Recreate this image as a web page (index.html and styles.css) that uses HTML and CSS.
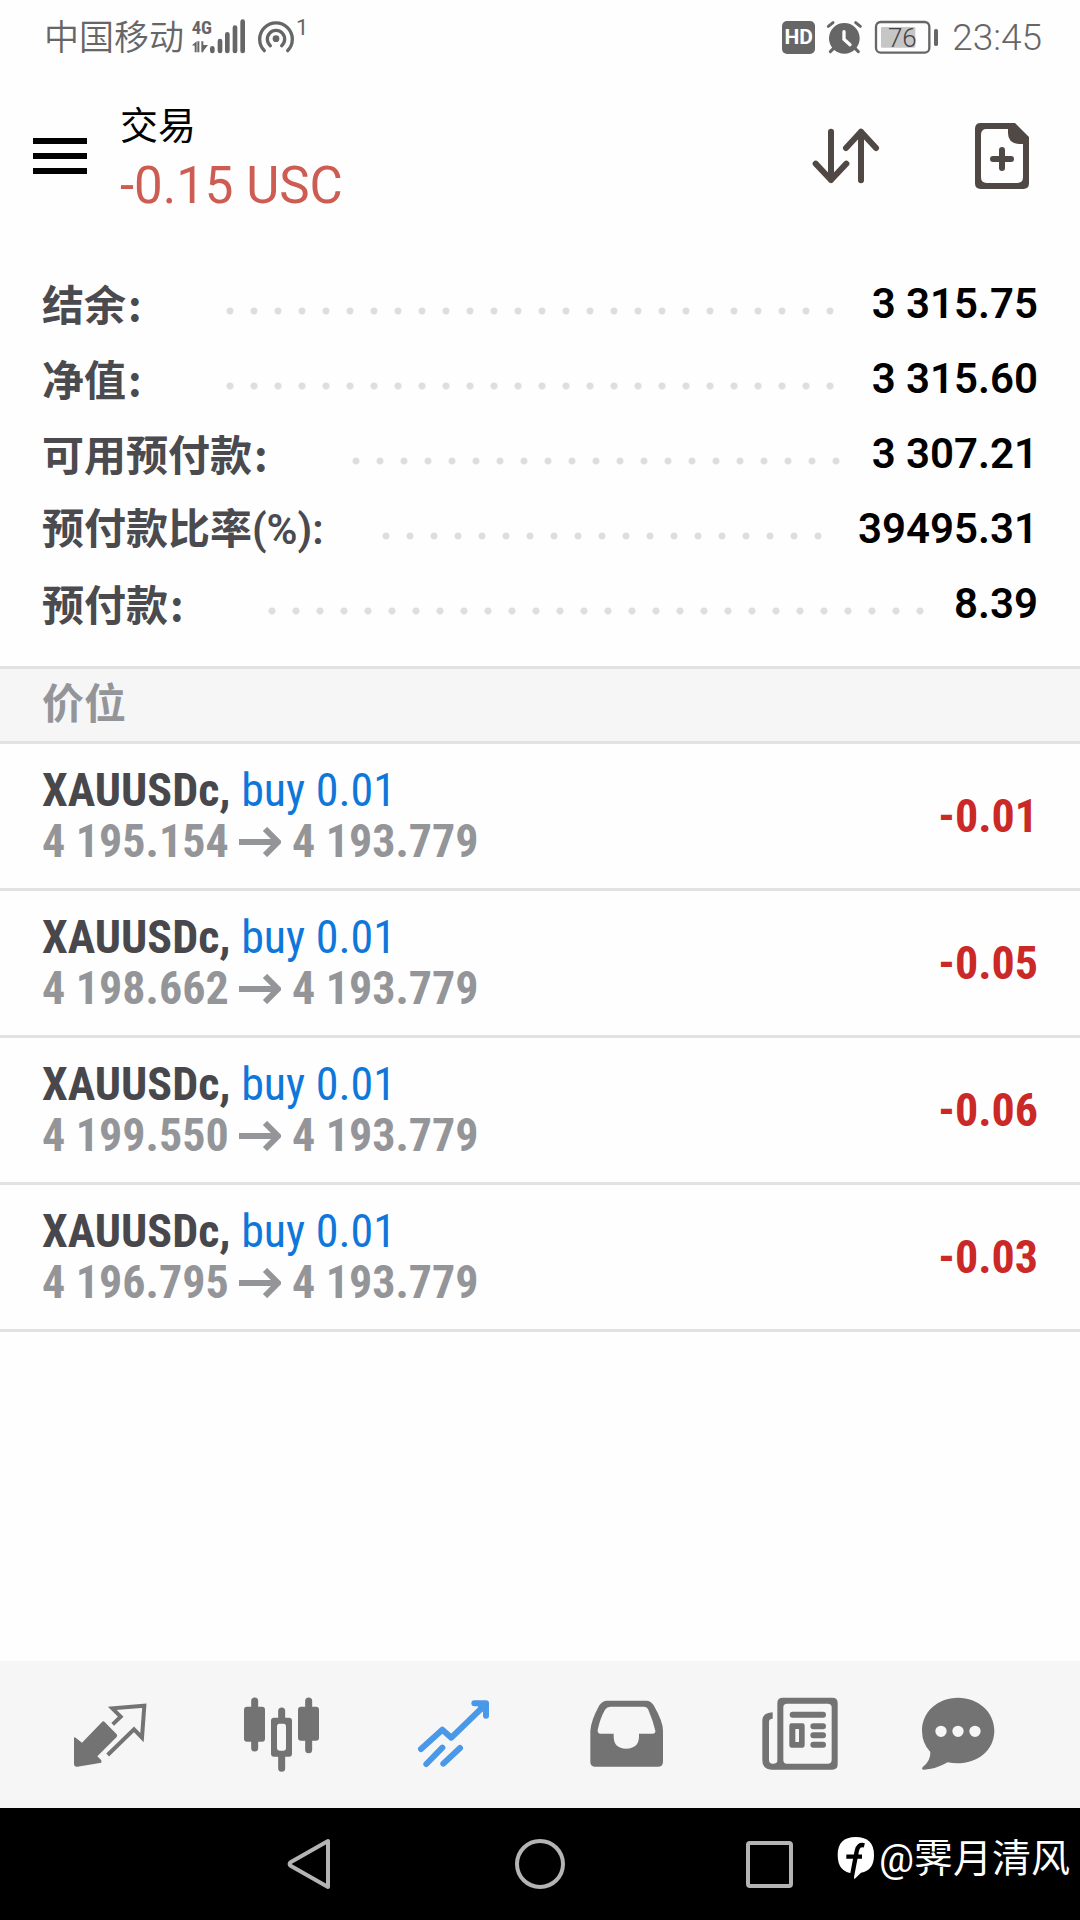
FILE: index.html
```html
<!DOCTYPE html>
<html lang="zh-CN">
<head>
<meta charset="utf-8">
<meta name="viewport" content="width=device-width, initial-scale=1">
<title>交易</title>
<link rel="stylesheet" href="styles.css">
</head>
<body>
<div class="status">
  <div class="status-side">
    <span class="carrier">中国移动</span>
    <svg class="signal" viewBox="570 48 174 120" aria-hidden="true">
      <text class="net" x="575" y="98">4G</text>
      <path d="M576 133l14-12v33h-6v-20zM592 121h6v33h-6zM604 121h6v33h-6zM610 132h14l-14 18z"/>
      <path class="bars" d="M637 142v8M660 120v30M682 100v50M705 80v70M728 62v88"/>
    </svg>
    <svg class="hotspot" viewBox="768 48 120 120" aria-hidden="true">
      <circle cx="828" cy="113" r="10"/>
      <path class="ring" d="M793 149A49 49 0 1 1 863 149M811 134A26 26 0 1 1 845 134"/>
    </svg>
    <sup class="count">1</sup>
  </div>
  <div class="status-side">
    <span class="hd">HD</span>
    <svg class="alarm" viewBox="252 48 114 120" aria-hidden="true">
      <circle cx="310" cy="112" r="46"/>
      <path class="bell" d="M262 76l14-11M358 76l-14-11M277 143l-9 9M343 143l9 9"/>
      <path class="hands" d="M309 92v23l18 16"/>
    </svg>
    <svg class="battery" viewBox="399 48 198 120" aria-hidden="true">
      <rect class="shell" x="405" y="63" width="160" height="92" rx="14"/>
      <rect class="charge" x="420" y="78" width="103" height="62" rx="4"/>
      <rect x="579" y="84" width="12" height="51" rx="5"/>
      <text class="percent" x="484" y="138" text-anchor="middle">76</text>
    </svg>
    <time class="clock">23:45</time>
  </div>
</div>

<header class="header">
  <button class="menu" type="button" aria-label="菜单"><span></span><span></span><span></span></button>
  <div class="heading">
    <h1 class="title">交易</h1>
    <p class="profit">-0.15 USC</p>
  </div>
  <div class="actions">
    <button class="action" type="button" aria-label="排序">
      <svg viewBox="210 360 216 216"><path class="sort" d="M273 395V540M227 491l46 49l46-49M363 541V395M318 444l45-49l45 49"/></svg>
    </button>
    <button class="action" type="button" aria-label="新订单">
      <svg viewBox="678 360 216 216"><path fill-rule="evenodd" d="M722 369H825L867 411V550Q867 567 850 567H722Q705 567 705 550V386Q705 369 722 369ZM740 387Q723 387 723 404V532Q723 549 740 549H832Q849 549 849 532V432H837Q804 430 804 400V387Z"/><path class="plus" d="M759 477H813M786 450V504"/></svg>
    </button>
  </div>
</header>

<main class="main">
  <dl class="account">
    <div class="account-row"><dt>结余<span class="colon">:</span></dt><dd>3 315.75</dd></div>
    <div class="account-row"><dt>净值<span class="colon">:</span></dt><dd>3 315.60</dd></div>
    <div class="account-row"><dt>可用预付款<span class="colon">:</span></dt><dd>3 307.21</dd></div>
    <div class="account-row"><dt>预付款比率(%):</dt><dd>39495.31</dd></div>
    <div class="account-row"><dt>预付款<span class="colon">:</span></dt><dd>8.39</dd></div>
  </dl>
  <h2 class="section">价位</h2>
  <ul class="positions">
    <li class="position">
      <div class="deal"><p><b class="symbol">XAUUSDc,</b> <span class="side">buy 0.01</span></p>
      <p class="prices">4 195.154 <svg class="arrow" viewBox="0 0 42 30" aria-label="至"><path d="M0 15H39M26 2L39 15L26 28"/></svg> 4 193.779</p></div>
      <span class="result">-0.01</span>
    </li>
    <li class="position">
      <div class="deal"><p><b class="symbol">XAUUSDc,</b> <span class="side">buy 0.01</span></p>
      <p class="prices">4 198.662 <svg class="arrow" viewBox="0 0 42 30" aria-label="至"><path d="M0 15H39M26 2L39 15L26 28"/></svg> 4 193.779</p></div>
      <span class="result">-0.05</span>
    </li>
    <li class="position">
      <div class="deal"><p><b class="symbol">XAUUSDc,</b> <span class="side">buy 0.01</span></p>
      <p class="prices">4 199.550 <svg class="arrow" viewBox="0 0 42 30" aria-label="至"><path d="M0 15H39M26 2L39 15L26 28"/></svg> 4 193.779</p></div>
      <span class="result">-0.06</span>
    </li>
    <li class="position">
      <div class="deal"><p><b class="symbol">XAUUSDc,</b> <span class="side">buy 0.01</span></p>
      <p class="prices">4 196.795 <svg class="arrow" viewBox="0 0 42 30" aria-label="至"><path d="M0 15H39M26 2L39 15L26 28"/></svg> 4 193.779</p></div>
      <span class="result">-0.03</span>
    </li>
  </ul>
</main>

<nav class="tabs">
  <button class="tab" type="button" aria-label="行情">
    <svg viewBox="60 103 300 300"><path d="M186 214Q190 210 194 214L230 251Q233 255 230 259L172 317L184 329V336L112 348Q102 349 102 339V260L107 261L126 276Z"/><path class="line" d="M218 221L242 198L217 173L313 165L306 261L282 236L203 313"/></svg>
  </button>
  <button class="tab" type="button" aria-label="图表">
    <svg viewBox="576 103 300 300"><path class="wick" d="M644 151V292M806 151V297M725 181V206M725 312V353"/><rect x="612" y="168" width="63" height="105" rx="9"/><rect x="774" y="168" width="63" height="102" rx="9"/><path fill-rule="evenodd" d="M702 201H747Q756 201 756 210V309Q756 318 747 318H702Q693 318 693 309V210Q693 201 702 201ZM718 219Q711 219 711 228V291Q711 300 720 300H730Q738 300 738 291V228Q738 219 731 219Z"/></svg>
  </button>
  <button class="tab tab-active" type="button" aria-label="交易" aria-current="page">
    <svg viewBox="1092 103 300 300"><path class="trend" d="M1143 295L1207 237L1234 261L1338 160M1303 158H1338V195"/><path d="M1305 158H1339V195Z"/><path class="trend" d="M1159 340L1207 291M1210 339L1260 292"/></svg>
  </button>
  <button class="tab" type="button" aria-label="历史">
    <svg viewBox="108 103 300 300"><path fill-rule="evenodd" d="M201 150H319Q333 150 341 164Q369 213 369 240V333Q369 348 354 348H166Q151 348 151 333V240Q153 210 178 164Q187 150 201 150ZM211 168Q201 168 195 177Q180 203 173 238Q172 249 182 249H221V257Q221 294 258 294Q297 294 297 257V249H337Q347 249 346 240Q339 210 325 177Q321 168 311 168Z"/></svg>
  </button>
  <button class="tab" type="button" aria-label="新闻">
    <svg viewBox="624 103 300 300"><path fill-rule="evenodd" d="M729 141H877Q893 141 893 157V341Q893 357 877 357H695Q667 357 667 329V210Q667 186 698 185V204Q687 204 687 213V328Q687 339 698 339H702Q712 339 712 329V157Q712 141 729 141ZM741 159Q730 159 730 170V328Q730 339 741 339H863Q875 339 875 328V170Q875 159 863 159ZM754 218H788Q794 218 794 225V284Q794 291 788 291H754Q748 291 748 284V225Q748 218 754 218ZM766 235V274H777V235Z"/><path class="type" d="M758 192H849M820 227H849M820 254H849M820 282H849"/></svg>
  </button>
  <button class="tab" type="button" aria-label="消息">
    <svg viewBox="1140 103 300 300"><path fill-rule="evenodd" d="M1254 141C1315 141 1363 184 1363 240C1363 308 1296 349 1223 335Q1185 357 1152 357Q1142 356 1149 348Q1172 331 1171 304Q1146 277 1146 240C1146 184 1193 141 1254 141ZM1186 242a17 17 0 1 0 34 0a17 17 0 1 0-34 0M1237 242a17 17 0 1 0 34 0a17 17 0 1 0-34 0M1288 242a17 17 0 1 0 34 0a17 17 0 1 0-34 0"/></svg>
  </button>
</nav>

<footer class="system">
  <button class="key" type="button" aria-label="返回"><svg viewBox="0 0 52 52"><path d="M44 3V49L7 28Q4 26 7 24Z"/></svg></button>
  <button class="key" type="button" aria-label="主页"><svg viewBox="0 0 52 52"><circle cx="26" cy="26" r="23"/></svg></button>
  <button class="key" type="button" aria-label="最近任务"><svg viewBox="0 0 52 52"><rect x="4" y="5" width="43" height="43" rx="2"/></svg></button>
  <div class="credit">
    <svg class="badge" viewBox="54 88 114 138" aria-hidden="true"><path d="M110 91Q165 91 165 145Q165 192 126 198L106 218L104 200Q56 198 56 145Q56 91 110 91Z"/><path class="letter" d="M136 116Q117 111 113 134L99 208M82 150H129"/></svg>
    <span>@霁月清风</span>
  </div>
</footer>
</body>
</html>
```
FILE: styles.css
```css
* {
  box-sizing: border-box;
}

body {
  margin: 0;
  min-height: 100vh;
  display: flex;
  flex-direction: column;
  background: #fefefe;
  color: #000;
  font-family: Roboto, "Noto Sans CJK SC", sans-serif;
}

h1, h2, p, ul, dl, dd {
  margin: 0;
  padding: 0;
}

ul {
  list-style: none;
}

button {
  padding: 0;
  border: 0;
  background: none;
  color: inherit;
}

svg {
  display: block;
  fill: currentColor;
}

/* Status bar */
.status {
  display: flex;
  justify-content: space-between;
  height: 72px;
  padding: 2px 38px 0 44px;
  color: #666;
}

.status-side {
  display: flex;
  align-items: center;
}

.status svg {
  height: 40px;
}

.carrier {
  padding-top: 4px;
  font-size: 35px;
  line-height: 68px;
  font-weight: 350;
}

.signal {
  width: 58px;
  margin-left: 6px;
}

.net {
  font-family: "Roboto Condensed", "Liberation Sans Narrow", sans-serif;
  font-size: 56px;
  font-weight: 700;
}

.bars {
  stroke: currentColor;
  stroke-width: 14;
  stroke-linecap: round;
}

.hotspot {
  width: 40px;
  margin-left: 8px;
}

.ring {
  fill: none;
  stroke: currentColor;
  stroke-width: 10;
  stroke-linecap: round;
}

.count {
  align-self: flex-start;
  padding-top: 14px;
  font-size: 22px;
  line-height: 24px;
}

.hd {
  width: 33px;
  height: 33px;
  border-radius: 5px;
  background: #666;
  color: #fff;
  font-size: 21px;
  line-height: 33px;
  font-weight: 700;
  text-align: center;
}

.alarm {
  width: 38px;
  margin-left: 10px;
}

.bell {
  stroke: currentColor;
  stroke-width: 9;
  stroke-linecap: round;
}

.hands {
  fill: none;
  stroke: #fff;
  stroke-width: 10;
  stroke-linecap: round;
}

.battery {
  width: 66px;
  margin-left: 11px;
}

.shell {
  fill: none;
  stroke: currentColor;
  stroke-width: 7;
}

.charge {
  fill: #c6c6c6;
}

.percent {
  font-size: 78px;
  font-weight: 300;
  fill: #444;
}

.clock {
  padding-top: 2px;
  margin-left: 12px;
  font-size: 37px;
  line-height: 68px;
  font-weight: 350;
}

/* Header */
.header {
  display: flex;
  align-items: center;
  height: 168px;
  padding: 0 42px 0 33px;
}

.menu {
  display: flex;
  flex-direction: column;
  gap: 9px;
  width: 54px;
}

.menu span {
  width: 100%;
  height: 6px;
  background: #000;
}

.heading {
  flex: 1;
  padding-left: 33px;
}

.title {
  font-size: 38px;
  line-height: 60px;
  font-weight: 400;
}

.profit {
  color: #cd5c52;
  font-size: 51px;
  line-height: 60px;
}

.actions {
  display: flex;
  gap: 84px;
  color: #504844;
}

.action svg {
  width: 72px;
  height: 72px;
}

.sort, .plus {
  fill: none;
  stroke: currentColor;
  stroke-width: 18;
  stroke-linecap: round;
  stroke-linejoin: round;
}

/* Account summary */
.main {
  flex: 1;
}

.account {
  padding: 26px 42px 25px;
}

.account-row {
  display: flex;
  align-items: center;
  height: 75px;
  font-size: 42px;
  line-height: 75px;
  white-space: nowrap;
}

.account-row::after {
  content: "";
  order: 1;
  flex: 1;
  height: 8px;
  margin: 15px 24px 0 50px;
  background: radial-gradient(circle, #dedede 3px, transparent 4px) 0 0 / 24px 8px repeat-x;
}

.account dt {
  padding-top: 1px;
  color: #4a4a4f;
  font-weight: 600;
}

.colon {
  display: inline-block;
  width: 42px;
  padding-left: 2px;
  font-family: "Noto Sans CJK SC", sans-serif;
}

.account dd {
  order: 2;
  font-weight: 600;
}

/* Positions */
.section {
  height: 78px;
  padding: 0 42px;
  border: solid #e2e2e2;
  border-width: 3px 0;
  background: #f6f6f6;
  color: #949599;
  font-size: 42px;
  line-height: 72px;
  font-weight: 600;
}

.position {
  display: flex;
  align-items: center;
  justify-content: space-between;
  height: 147px;
  padding: 0 42px;
  border-bottom: 3px solid #e2e2e2;
  font-family: "Roboto Condensed", "Liberation Sans Narrow", sans-serif;
  font-size: 46px;
  line-height: 51px;
}

.symbol {
  color: #48474c;
}

.side {
  color: #0f77da;
}

.prices {
  color: #949599;
  font-weight: 700;
}

.arrow {
  display: inline-block;
  width: 42px;
  height: 30px;
  fill: none;
  stroke: currentColor;
  stroke-width: 6;
}

.result {
  color: #cb2828;
  font-weight: 700;
}

/* Tabs */
.tabs {
  display: flex;
  align-items: center;
  justify-content: space-between;
  height: 147px;
  padding: 0 60px;
  background: #f6f6f6;
  color: #737373;
}

.tab svg {
  width: 100px;
  height: 100px;
}

.tab-active {
  color: #4a98e8;
}

.line, .wick, .trend, .type {
  fill: none;
  stroke: currentColor;
}

.line {
  stroke-width: 12;
}

.wick {
  stroke-width: 21;
  stroke-linecap: round;
}

.trend {
  stroke-width: 18;
  stroke-linecap: round;
  stroke-linejoin: round;
}

.type {
  stroke-width: 18;
  stroke-linecap: round;
}

/* System keys */
.system {
  position: relative;
  display: flex;
  align-items: center;
  justify-content: center;
  gap: 178px;
  height: 112px;
  background: #000;
}

.key svg {
  width: 52px;
  height: 52px;
  fill: none;
  stroke: #b4b4b4;
  stroke-width: 4;
  stroke-linejoin: round;
}

.credit {
  position: absolute;
  right: 10px;
  top: 25px;
  display: flex;
  align-items: center;
  gap: 4px;
  color: #fff;
  font-size: 39px;
  line-height: 52px;
}

.badge {
  width: 38px;
  height: 46px;
}

.letter {
  fill: none;
  stroke: #000;
  stroke-width: 13;
}
```
